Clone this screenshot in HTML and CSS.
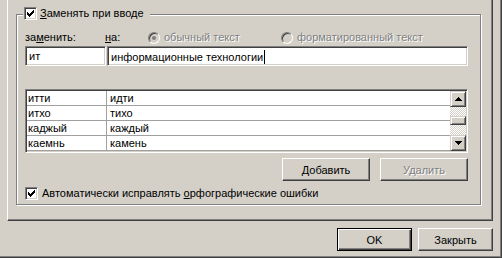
FILE: index.html
```html
<html>
    <head>
        <link rel="stylesheet" href="styles.css">
    </head>
    <body>
        <div class="dialog">
            <div class="page">
                <div class="group">

                    <div class="group-title">
                        <span class="check"><svg width="11" height="11" viewBox="0 0 11 11"><path d="M2 4h1v3H2zM3 5h1v3H3zM4 6h1v3H4zM5 5h1v3H5zM6 4h1v3H6zM7 3h1v3H7zM8 2h1v3H8z" fill="#000"/></svg></span>
                        <span><u>З</u>аменять при вводе</span>
                    </div>

                    <div class="labels">
                        <span class="lbl-from">за<u>м</u>енить:</span>
                        <span class="lbl-to"><u>н</u>а:</span>
                        <span class="option opt-plain"><span class="radio checked"></span>обычный текст</span>
                        <span class="option"><span class="radio"></span>форматированный текст</span>
                    </div>

                    <div class="inputs">
                        <div class="edit edit-from">ит</div>
                        <div class="edit edit-to">информационные технологии<span class="caret"></span></div>
                    </div>

                    <div class="list">
                        <div class="rows">
                            <div class="row"><span class="c1">итти</span><span class="c2">идти</span></div>
                            <div class="row"><span class="c1">итхо</span><span class="c2">тихо</span></div>
                            <div class="row"><span class="c1">каджый</span><span class="c2">каждый</span></div>
                            <div class="row"><span class="c1">каемнь</span><span class="c2">камень</span></div>
                        </div>
                        <div class="scroll">
                            <div class="sbtn"><svg width="7" height="4" viewBox="0 0 7 4"><path d="M3 0h1v1H3zM2 1h3v1H2zM1 2h5v1H1zM0 3h7v1H0z" fill="#000"/></svg></div>
                            <div class="track"><div class="thumb"></div></div>
                            <div class="sbtn"><svg width="7" height="4" viewBox="0 0 7 4"><path d="M0 0h7v1H0zM1 1h5v1H1zM2 2h3v1H2zM3 3h1v1H3z" fill="#000"/></svg></div>
                        </div>
                    </div>

                    <div class="list-buttons">
                        <button class="btn"><u>Д</u>обавить</button>
                        <button class="btn" disabled>Удалить</button>
                    </div>

                    <div class="auto">
                        <span class="check"><svg width="11" height="11" viewBox="0 0 11 11"><path d="M2 4h1v3H2zM3 5h1v3H3zM4 6h1v3H4zM5 5h1v3H5zM6 4h1v3H6zM7 3h1v3H7zM8 2h1v3H8z" fill="#000"/></svg></span>
                        <span>Автоматически исправлять <u>о</u>рфографические ошибки</span>
                    </div>

                </div>
            </div>

            <div class="footer">
                <button class="btn btn-default">OK</button>
                <button class="btn">Закрыть</button>
            </div>
        </div>
    </body>
</html>
```

FILE: styles.css
```css
body {
    margin: 0;
    background: #d4d0c8;
    font-family: "Liberation Sans", Arial, sans-serif;
    font-size: 11px;
    line-height: 13px;
    color: #000;
}

u {
    text-decoration: underline;
    text-underline-offset: 1px;
}

.dialog {
    width: 502px;
    height: 258px;
    box-sizing: border-box;
    border-right: 1px solid #404040;
    border-bottom: 1px solid #404040;
    box-shadow: inset -1px -1px #808080;
}

.page {
    margin-left: 7px;
    width: 486px;
    height: 221px;
    box-sizing: border-box;
    border-left: 1px solid #fff;
    border-right: 1px solid #404040;
    border-bottom: 1px solid #404040;
    box-shadow: inset -1px -1px #808080;
    padding: 14px 11px 0 8px;
}

.group {
    position: relative;
    height: 191px;
    box-sizing: border-box;
    border: 1px solid #808080;
    box-shadow: inset 1px 1px #fff, 1px 1px #fff;
    padding: 16px 12px 0 8px;
}

.group-title {
    position: absolute;
    left: 6px;
    top: -8px;
    display: flex;
    align-items: center;
    gap: 3px;
    padding: 0 6px 0 1px;
    background: #d4d0c8;
}

.check {
    display: inline-block;
    width: 13px;
    height: 13px;
    box-sizing: border-box;
    background: #fff;
    border: 1px solid;
    border-color: #808080 #fff #fff #808080;
    box-shadow: inset 1px 1px #404040, inset -1px -1px #d4d0c8;
}

.check svg {
    display: block;
}

.labels {
    display: flex;
    align-items: center;
    height: 13px;
}

.lbl-from {
    width: 80px;
}

.lbl-to {
    width: 43px;
}

.option {
    display: flex;
    align-items: center;
    gap: 4px;
    color: #808080;
    text-shadow: 1px 1px #fff;
}

.opt-plain {
    width: 133px;
}

.radio {
    position: relative;
    width: 12px;
    height: 12px;
    box-sizing: border-box;
    border-radius: 50%;
    border: 1px solid;
    border-color: #808080 #fff #fff #808080;
    box-shadow: inset 1px 1px #404040;
    background: #d4d0c8;
}

.radio.checked::after {
    content: "";
    position: absolute;
    left: 3px;
    top: 3px;
    width: 4px;
    height: 4px;
    border-radius: 50%;
    background: #808080;
}

.inputs {
    display: flex;
    gap: 1px;
    margin-top: 2px;
}

.edit {
    height: 20px;
    box-sizing: border-box;
    background: #fff;
    border: 1px solid;
    border-color: #808080 #fff #fff #808080;
    box-shadow: inset 1px 1px #404040, inset -1px -1px #d4d0c8;
    padding: 3px 0 0 3px;
    white-space: nowrap;
}

.edit-from {
    width: 81px;
}

.edit-to {
    width: 361px;
}

.caret {
    display: inline-block;
    width: 1px;
    height: 14px;
    margin-left: 1px;
    background: #000;
    vertical-align: -3px;
}

.list {
    display: flex;
    margin-top: 23px;
    height: 64px;
    box-sizing: border-box;
    background: #fff;
    border: 1px solid;
    border-color: #808080 #fff #fff #808080;
    box-shadow: inset 1px 1px #404040, inset -1px -1px #d4d0c8;
    padding: 1px;
}

.rows {
    flex: 1;
}

.row {
    display: flex;
    height: 15px;
    box-sizing: border-box;
    border-bottom: 1px solid #a0a0a0;
    line-height: 14px;
}

.c1 {
    width: 80px;
    padding-left: 1px;
    box-sizing: border-box;
    border-right: 1px solid #a0a0a0;
}

.c2 {
    padding-left: 3px;
}

.scroll {
    display: flex;
    flex-direction: column;
    width: 16px;
}

.sbtn {
    display: flex;
    align-items: center;
    justify-content: center;
    height: 16px;
    box-sizing: border-box;
    background: #d4d0c8;
    border: 1px solid;
    border-color: #d4d0c8 #404040 #404040 #d4d0c8;
    box-shadow: inset 1px 1px #fff, inset -1px -1px #808080;
}

.track {
    flex: 1;
    padding-top: 9px;
    background: repeating-conic-gradient(#fff 0 25%, #d4d0c8 0 50%) 0 0 / 2px 2px;
}

.thumb {
    height: 9px;
    box-sizing: border-box;
    background: #d4d0c8;
    border: 1px solid;
    border-color: #d4d0c8 #404040 #404040 #d4d0c8;
    box-shadow: inset 1px 1px #fff, inset -1px -1px #808080;
}

.list-buttons {
    display: flex;
    justify-content: flex-end;
    gap: 10px;
    margin-top: 5px;
}

.btn {
    width: 88px;
    height: 23px;
    box-sizing: border-box;
    margin: 0;
    padding: 0;
    background: #d4d0c8;
    border: 1px solid;
    border-color: #fff #404040 #404040 #fff;
    box-shadow: inset -1px -1px #808080;
    font-family: "Liberation Sans", Arial, sans-serif;
    font-size: 11px;
    color: #000;
}

.btn:disabled {
    color: #808080;
    text-shadow: 1px 1px #fff;
}

.auto {
    display: flex;
    align-items: center;
    gap: 4px;
    margin-top: 6px;
}

.footer {
    display: flex;
    justify-content: flex-end;
    gap: 6px;
    padding: 7px 8px 0 0;
}

.footer .btn {
    width: 75px;
}

.btn-default {
    border: 1px solid #000;
    box-shadow: inset 1px 1px #fff, inset -1px -1px #404040, inset -2px -2px #808080;
}
```
